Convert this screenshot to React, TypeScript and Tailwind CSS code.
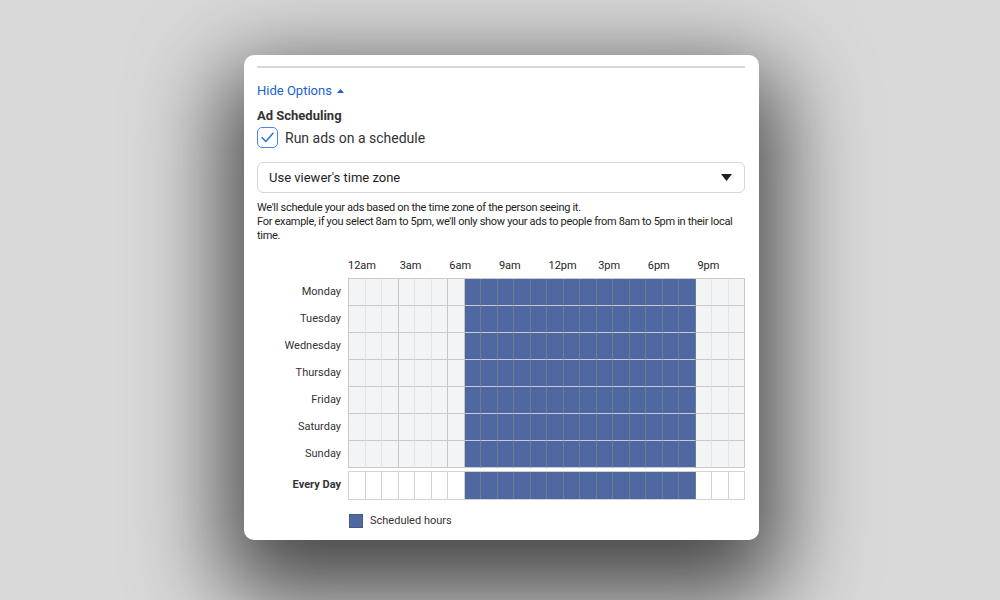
import React from 'react';

const days = ['Monday', 'Tuesday', 'Wednesday', 'Thursday', 'Friday', 'Saturday', 'Sunday'];
const hourLabels = ['12am', '3am', '6am', '9am', '12pm', '3pm', '6pm', '9pm'];
const hours = Array.from({ length: 24 }, (_, i) => i);

const isScheduled = (h: number) => h >= 7 && h <= 20;

const DayCell: React.FC<{ hour: number }> = ({ hour }) => {
  if (isScheduled(hour)) {
    return <div className="h-[27px] bg-[#5068a1] border-r border-b border-r-[#6f7e8e] border-b-[#c9ccd3]" />;
  }
  // heavier line every 3 hours
  const major = hour % 3 === 2 || hour === 6;
  return (
    <div
      className={
        major
          ? 'h-[27px] bg-[#f3f4f6] border-r border-b border-r-[#c6c6c6] border-b-[#c9c9c9]'
          : 'h-[27px] bg-[#f3f4f6] border-r border-b border-r-[#e4e5e7] border-b-[#c9c9c9]'
      }
    />
  );
};

const EveryDayCell: React.FC<{ hour: number }> = ({ hour }) =>
  isScheduled(hour) ? (
    <div className="h-[27px] bg-[#5068a1] border-r border-r-[#6f7e8e]" />
  ) : (
    <div className="h-[27px] bg-white border-r border-r-[#d2d2d2]" />
  );

export default function App() {
  return (
    <div className="min-h-[600px] w-full bg-[#d9d9d9] flex justify-center pt-[55px] font-['Roboto','Liberation_Sans',sans-serif] text-[#1c1e21]">
      <div className="ml-[3px] w-[515px] h-[485px] bg-white rounded-[10px] shadow-[0_35px_90px_20px_rgba(0,0,0,0.68)] px-[13px] pt-[11px]">
        <div className="h-[2px] bg-[#d6d7d9] mr-[1px]" />

        <button className="mt-[15px] flex items-center gap-[5px] text-[13px] leading-[16px] text-[#1a5fd4]">
          Hide Options
          <svg width="7" height="4" viewBox="0 0 7 4">
            <path d="M0 4 L3.5 0 L7 4 Z" fill="#1a5fd4" />
          </svg>
        </button>

        <div className="mt-[9px] text-[13px] leading-[16px] font-bold text-[#333]">Ad Scheduling</div>

        <label className="mt-[3px] flex items-center gap-[7px]">
          <span className="w-[21px] h-[21px] rounded-[5px] border-[1.5px] border-[#4b86ee] flex items-center justify-center">
            <svg width="13" height="11" viewBox="0 0 13 11" fill="none">
              <path d="M1 5.5 L4.8 9.5 L12 1.2" stroke="#2f6fe4" strokeWidth="1.5" strokeLinecap="round" strokeLinejoin="round" />
            </svg>
          </span>
          <span className="text-[14px] leading-[18px] text-[#333]">Run ads on a schedule</span>
        </label>

        <div className="mt-[14px] h-[31px] mr-[1px] border border-[#d4d6d9] rounded-[6px] flex items-center justify-between pl-[11px] pr-[12px]">
          <span className="text-[13px] text-[#1c1e21]">Use viewer's time zone</span>
          <svg width="11" height="7" viewBox="0 0 11 7">
            <path d="M0 0 H11 L5.5 7 Z" fill="#1c1e21" />
          </svg>
        </div>

        <p className="mt-[8px] text-[11px] leading-[14px] text-[#1c1e21] tracking-[-0.3px]">
          We'll schedule your ads based on the time zone of the person seeing it.
          <br />
          For example, if you select 8am to 5pm, we'll only show your ads to people from 8am to 5pm in their local time.
        </p>

        <div className="mt-[13px] flex gap-[7px]">
          {/* day labels */}
          <div className="w-[84px] flex flex-col items-end text-[11px] text-[#333]">
            <div className="h-[23px]" />
            {days.map((d) => (
              <div key={d} className="h-[27px] flex items-center">
                {d}
              </div>
            ))}
            <div className="h-[29px] flex items-center font-bold mt-[3px]">Every Day</div>
          </div>

          <div className="w-[397px]">
            <div className="h-[22px] grid grid-cols-8 text-[11px] text-[#1c1e21] items-start pt-[2px]">
              {hourLabels.map((l, i) => (
                <span key={l} className={i === 0 ? 'pl-0' : 'pl-[2px]'}>
                  {l}
                </span>
              ))}
            </div>

            <div className="grid grid-cols-[repeat(24,minmax(0,1fr))] border-l border-t border-[#c9c9c9]">
              {days.map((d) => hours.map((h) => <DayCell key={d + h} hour={h} />))}
            </div>

            <div className="mt-[3px] grid grid-cols-[repeat(24,minmax(0,1fr))] border border-r-0 border-[#d2d2d2]">
              {hours.map((h) => (
                <EveryDayCell key={h} hour={h} />
              ))}
            </div>

            <div className="mt-[13px] flex items-center gap-[7px] pl-[1px]">
              <span className="w-[14px] h-[14px] bg-[#5068a1] border border-[#43598f]" />
              <span className="text-[11px] text-[#333]">Scheduled hours</span>
            </div>
          </div>
        </div>
      </div>
    </div>
  );
}
